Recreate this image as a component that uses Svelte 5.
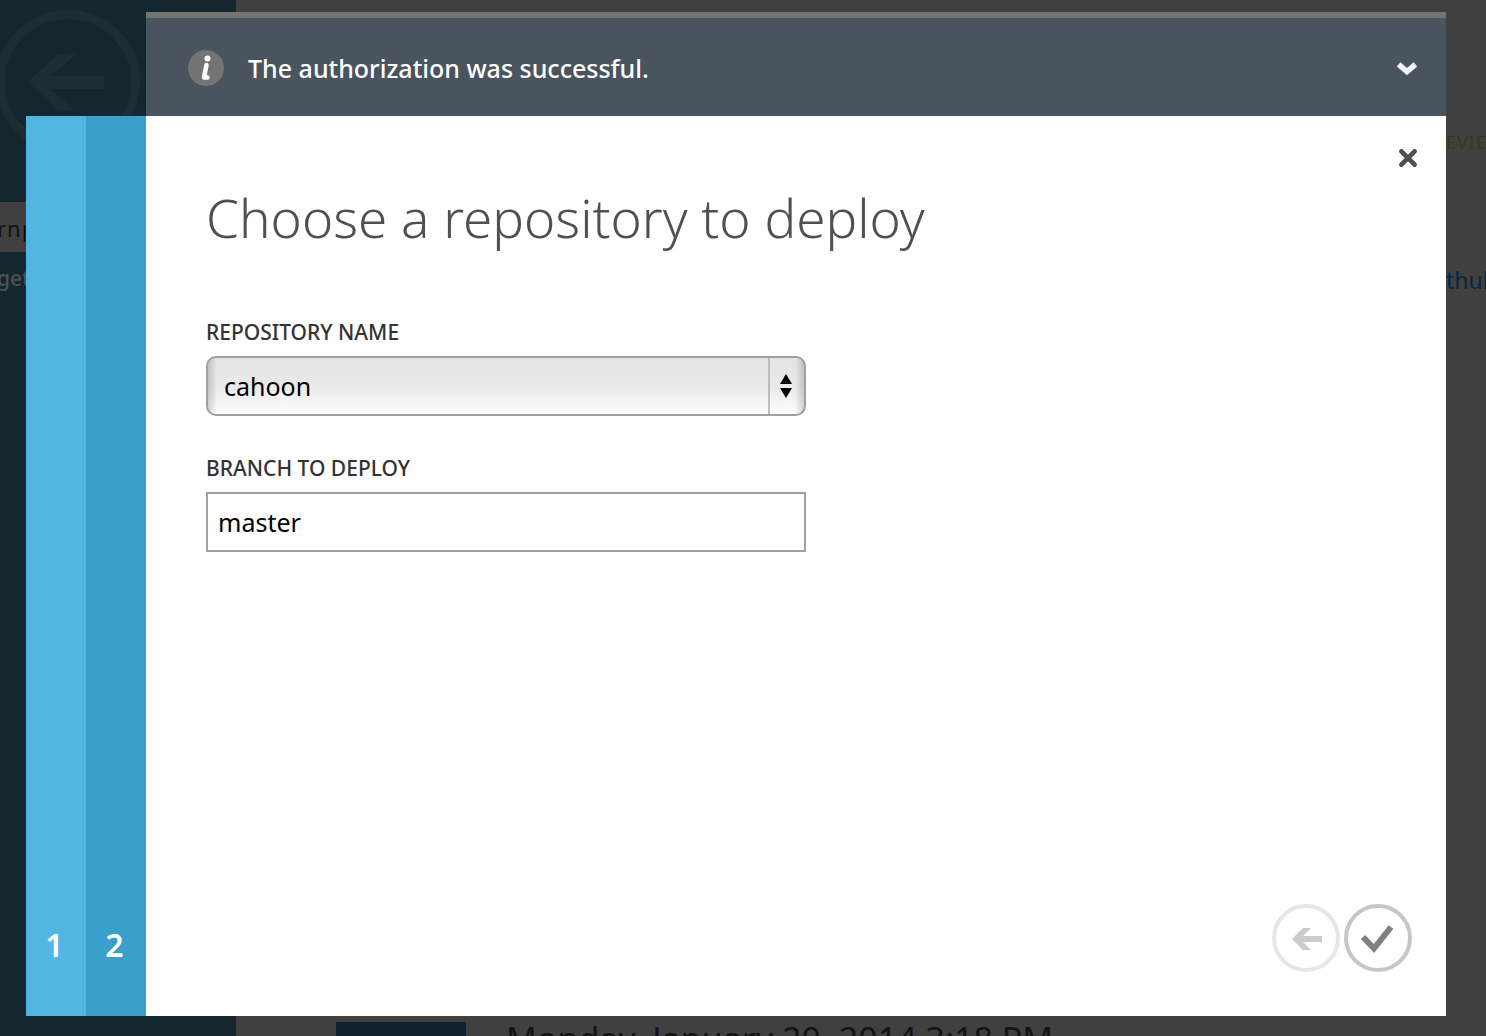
<script>
  let repository = $state('cahoon');
  let branch = $state('master');
  const repositories = ['cahoon'];
  const steps = [1, 2];
</script>

<div class="page">
  <aside class="sidebar">
    <svg class="back" viewBox="0 0 144 144" aria-hidden="true">
      <circle cx="72" cy="72" r="67.500" fill="none" stroke="currentColor" stroke-width="9" />
      <path d="M32 72 62 44H80L55 66H108V79H55L78 100H62Z" fill="currentColor" />
    </svg>
    <div class="site">rnp</div>
    <div class="site-note">get</div>
  </aside>
  <main class="content">
    <div class="preview">EVIE</div>
    <div class="source">thub</div>
    <div class="history">
      <div class="thumb"></div>
      <div class="date">Monday, January 20, 2014 3:18 PM</div>
    </div>
  </main>
</div>

<div class="dialog" role="dialog" aria-labelledby="dialog-title">
  <div class="notice" role="status">
    <svg class="info" viewBox="0 0 36 36" aria-hidden="true">
      <circle cx="18" cy="18" r="18" fill="#747474" />
      <circle cx="19.500" cy="8.500" r="3" fill="#fff" />
      <path d="M18.500 15 16 27.500H19.500" fill="none" stroke="#fff" stroke-width="4.500" stroke-linecap="round" stroke-linejoin="round" />
    </svg>
    <span class="message">The authorization was successful.</span>
    <button class="icon-button" aria-label="Collapse message">
      <svg viewBox="0 0 20 20"><path d="M3 7 10 13 17 7" fill="none" stroke="#f4f6f8" stroke-width="4.500" /></svg>
    </button>
  </div>

  {#each steps as step}
    <div class="step" class:current={step === 2}>{step}</div>
  {/each}

  <form class="panel" onsubmit={(e) => e.preventDefault()}>
    <button type="button" class="icon-button close" aria-label="Close">
      <svg viewBox="0 0 20 20"><path d="M4.500 4.500 15.500 15.500M15.500 4.500 4.500 15.500" fill="none" stroke="#505050" stroke-width="4" stroke-linecap="round" /></svg>
    </button>
    <h1 id="dialog-title">Choose a repository to deploy</h1>

    <label for="repository">REPOSITORY NAME</label>
    <div class="select">
      <select id="repository" bind:value={repository}>
        {#each repositories as name}
          <option value={name}>{name}</option>
        {/each}
      </select>
      <svg class="arrows" viewBox="0 0 12 24" aria-hidden="true">
        <path d="M6 0 12 10H0ZM0 14H12L6 24Z" fill="#000" />
      </svg>
    </div>

    <label for="branch">BRANCH TO DEPLOY</label>
    <input id="branch" type="text" bind:value={branch} />

    <div class="actions">
      <button type="button" class="round" aria-label="Previous">
        <svg viewBox="0 0 68 68">
          <circle cx="34" cy="34" r="32" fill="none" stroke="#e6e6e6" stroke-width="4" />
          <path d="M20 35 31 24H39L31 32H50V38H31L39 46H31Z" fill="#cbcbcb" />
        </svg>
      </button>
      <button type="submit" class="round" aria-label="Complete">
        <svg viewBox="0 0 68 68">
          <circle cx="34" cy="34" r="32" fill="none" stroke="#c6c6c6" stroke-width="4" />
          <path d="M19 33 30 44.500 47 23" fill="none" stroke="#808080" stroke-width="6" />
        </svg>
      </button>
    </div>
  </form>
</div>

<style>
  :global(body) {
    margin: 0;
    background: #404040;
    font-family: 'Noto Sans', 'Open Sans', sans-serif;
  }

  .page {
    display: grid;
    grid-template-columns: 236px 1fr;
    height: 100vh;
    overflow: hidden;
    background: #404040;
  }

  .sidebar {
    background: #15272e;
    overflow: hidden;
  }

  .back {
    display: block;
    width: 144px;
    height: 144px;
    margin: 10px 0 48px -4px;
    color: #1e2d34;
  }

  .site {
    height: 50px;
    margin-left: -3px;
    background: #404040;
    color: #111;
    font-size: 22px;
    line-height: 52px;
    letter-spacing: 1px;
  }

  .site-note {
    margin-left: -3px;
    color: #4a5256;
    font-size: 21px;
    font-weight: 500;
    line-height: 52px;
  }

  .content {
    display: flex;
    flex-direction: column;
    overflow: hidden;
  }

  .preview,
  .source {
    align-self: flex-end;
    width: 40px;
    white-space: nowrap;
  }

  .preview {
    margin-top: 130px;
    color: #2f3e14;
    font-size: 18px;
    line-height: 24px;
    letter-spacing: 1px;
  }

  .source {
    margin-top: 110px;
    color: #06283d;
    font-size: 23px;
    line-height: 32px;
  }

  .history {
    display: flex;
    gap: 40px;
    height: 14px;
    margin-top: auto;
    padding-left: 100px;
  }

  .thumb {
    width: 130px;
    height: 80px;
    background: #11212f;
  }

  .date {
    color: #141414;
    font-size: 34px;
    line-height: 34px;
    white-space: nowrap;
  }

  .dialog {
    position: fixed;
    inset: 12px 40px 20px 26px;
    display: grid;
    grid-template-columns: 60px 60px 1fr;
    grid-template-rows: auto 1fr;
  }

  .notice {
    grid-column: 3;
    display: flex;
    align-items: center;
    gap: 24px;
    box-sizing: border-box;
    height: 104px;
    padding: 2px 27px 0 42px;
    border-top: 6px solid #747474;
    background: #49545f;
    color: #fff;
  }

  .info {
    width: 36px;
    height: 36px;
  }

  .message {
    flex: 1;
    font-size: 25px;
    font-weight: 500;
    line-height: 36px;
  }

  .icon-button,
  .round {
    display: block;
    padding: 0;
    border: 0;
    background: none;
    cursor: pointer;
  }

  .icon-button svg {
    display: block;
    width: 24px;
    height: 24px;
  }

  .step {
    display: flex;
    align-items: flex-end;
    justify-content: center;
    box-sizing: border-box;
    padding: 0 3px 49px 0;
    background: #53b6e2;
    color: #fff;
    font-size: 32px;
    font-weight: 600;
    line-height: 44px;
  }

  .step.current {
    background: #3a9fca;
  }

  .panel {
    display: flex;
    flex-direction: column;
    padding: 30px 34px 44px 60px;
    background: #fff;
  }

  .close {
    align-self: flex-end;
    margin-right: -8px;
  }

  h1 {
    margin: 10px 0 60px;
    color: #505050;
    font-size: 53px;
    font-weight: 300;
    line-height: 76px;
  }

  label {
    margin-bottom: 8px;
    color: #333;
    font-size: 21px;
    font-weight: 500;
    line-height: 32px;
  }

  .select {
    position: relative;
    width: 100%;
    max-width: 600px;
    margin-bottom: 36px;
  }

  select,
  input {
    display: block;
    box-sizing: border-box;
    width: 100%;
    max-width: 600px;
    height: 60px;
    border: 2px solid #a0a0a0;
    color: #000;
    font-family: inherit;
    font-size: 25px;
  }

  select {
    appearance: none;
    padding: 0 52px 0 16px;
    border-radius: 10px;
    background:
      linear-gradient(90deg, transparent calc(100% - 36px), #bdbdbd calc(100% - 36px), #bdbdbd calc(100% - 34px), transparent calc(100% - 34px)),
      linear-gradient(90deg, rgba(0, 0, 0, 0.16), transparent 9px, transparent calc(100% - 9px), rgba(0, 0, 0, 0.16)),
      linear-gradient(#e4e4e4, #e9e9e9 50%, #fdfdfd);
  }

  .arrows {
    position: absolute;
    top: 18px;
    right: 14px;
    width: 12px;
    height: 24px;
    pointer-events: none;
  }

  input {
    padding: 0 10px;
    background: #fff;
  }

  .actions {
    display: flex;
    justify-content: flex-end;
    gap: 4px;
    margin-top: auto;
  }

  .round svg {
    display: block;
    width: 68px;
    height: 68px;
  }
</style>
